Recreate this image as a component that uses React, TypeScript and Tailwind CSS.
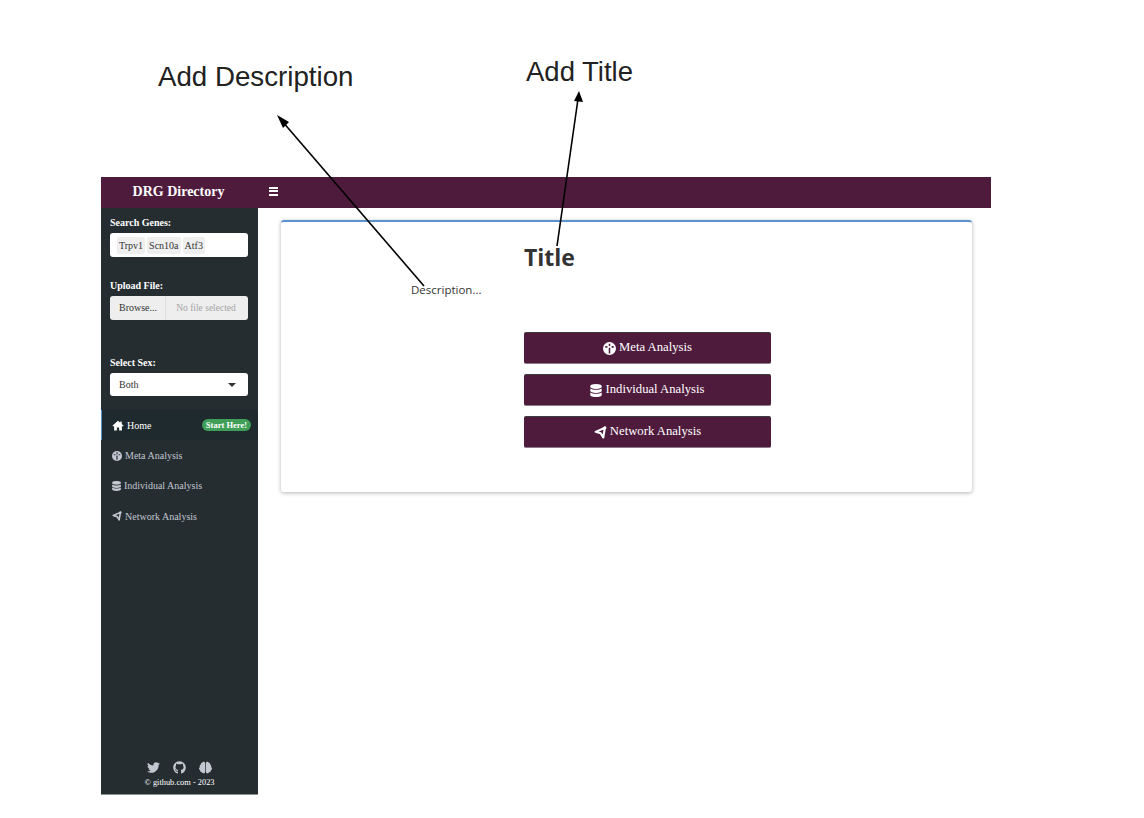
import { FaBrain, FaDatabase, FaGithub, FaTwitter } from 'react-icons/fa';
import type { ReactNode } from 'react';

const serif = "font-['Liberation_Serif',serif]";

function HomeIcon({ className }: { className?: string }) {
  return (
    <svg viewBox="0 0 16 14" className={className} fill="currentColor">
      <path d="M8 0.5 0.5 7.2 1.6 8.4 2.8 7.4V13.5H6.5V9.5H9.5V13.5H13.2V7.4L14.4 8.4 15.5 7.2 13 5V1.5H11V3.2Z" />
    </svg>
  );
}

function NetworkIcon({ className }: { className?: string }) {
  return (
    <svg viewBox="0 0 16 16" className={className} fill="none" stroke="currentColor">
      <path d="M2 7.2 13.4 2.2 11.4 14.2 8.2 9Z" strokeWidth="2.6" strokeLinejoin="round" />
      <circle cx="13.4" cy="2.2" r="1.9" fill="currentColor" stroke="none" />
    </svg>
  );
}

// gauge glyph, the marks take the colour of whatever is behind the icon
function MetaIcon({ className, markColor }: { className?: string; markColor: string }) {
  return (
    <svg viewBox="0 0 16 16" className={className}>
      <circle cx="8" cy="8" r="8" fill="currentColor" />
      <path d="M8 2V5M2.8 6H5.4M10.6 6H13.2M8 7V14" stroke={markColor} strokeWidth="1.9" />
    </svg>
  );
}

function Field({ label, children }: { label: string; children: ReactNode }) {
  return (
    <div>
      <div className="mb-[4px] text-[10px] leading-[12px] font-bold text-white">{label}</div>
      {children}
    </div>
  );
}

function NavItem({ icon, label, active, badge }: { icon: ReactNode; label: string; active?: boolean; badge?: boolean }) {
  return (
    <div
      className={`flex h-[30.4px] items-center text-[10px] ${
        active ? 'border-l border-[#5b8fc0] bg-[#1f2a2e] pl-[10px] text-white' : 'pl-[11px] text-[#c2c7d0]'
      }`}
    >
      {icon}
      <span className="ml-[3px]">{label}</span>
      {badge && (
        <span className="mr-[7px] ml-auto rounded-full bg-[#3f9f58] px-[4px] text-[8.5px] leading-[12px] font-bold text-white">
          Start Here!
        </span>
      )}
    </div>
  );
}

function ActionButton({ icon, label }: { icon: ReactNode; label: string }) {
  return (
    <button className="flex h-[32px] w-[247px] items-center justify-center gap-[3px] rounded-[2px] border-t border-b border-t-[#3c3c3c] border-b-[#8a7a88] bg-[#4f1b3d] text-[12.7px] text-white">
      {icon}
      {label}
    </button>
  );
}

function Arrows() {
  return (
    <svg className="absolute top-0 left-0" width="1144" height="818" fill="none">
      <path d="M424 286 282 121" stroke="#000" strokeWidth="1.6" />
      <path d="M277 115 289 122 283 128Z" fill="#000" />
      <path d="M557 246 578 99" stroke="#000" strokeWidth="1.6" />
      <path d="M579 91 583 102 574 101Z" fill="#000" />
    </svg>
  );
}

export default function App() {
  return (
    <div className="relative h-[818px] w-[1144px] overflow-hidden bg-white">
      <div className="pt-[177px] pl-[101px]">
        <div className={`flex h-[618px] w-[890px] flex-col ${serif}`}>
          <header className="flex h-[31px] shrink-0 items-center bg-[#4f1b3d] pb-[3px] text-white">
            <div className="w-[155px] text-center text-[14px] font-bold">DRG Directory</div>
            <div className="ml-[13px] flex w-[9px] flex-col gap-[1.5px]">
              <span className="h-[2px] bg-white" />
              <span className="h-[2px] bg-white" />
              <span className="h-[2px] bg-white" />
            </div>
          </header>
          <div className="flex min-h-0 flex-1">
            <aside className="flex w-[157px] shrink-0 flex-col border-b border-[#8b9296] bg-[#262d31]">
              <div className="flex flex-col gap-[23px] pt-[9px] pr-[10px] pl-[9px]">
                <Field label="Search Genes:">
                  <div className="flex h-[24px] items-center gap-[2px] rounded-[3px] bg-white px-[7px] text-[10px] text-[#333]">
                    <span className="rounded-[2px] bg-[#efefef] px-[2px] py-[1px]">Trpv1</span>
                    <span className="rounded-[2px] bg-[#efefef] px-[2px] py-[1px]">Scn10a</span>
                    <span className="rounded-[2px] bg-[#efefef] px-[2px] py-[1px]">Atf3</span>
                  </div>
                </Field>
                <Field label="Upload File:">
                  <div className="flex h-[24px] items-center rounded-[3px] bg-[#eeeeee] text-[10px]">
                    <span className="w-[56px] border-r border-[#dcdce2] pl-[1px] text-center leading-[24px] text-[#333]">Browse...</span>
                    <span className="flex-1 pr-[2px] text-center text-[9.5px] text-[#a5a5a5]">No file selected</span>
                  </div>
                </Field>
                <div className="pt-[14px]">
                  <Field label="Select Sex:">
                    <div className="flex h-[23px] items-center justify-between rounded-[3px] bg-white pr-[12px] pl-[9px] text-[10px] text-[#333]">
                      Both
                      <span className="h-0 w-0 border-x-[4px] border-t-[4px] border-x-transparent border-t-[#333]" />
                    </div>
                  </Field>
                </div>
              </div>
              <nav className="mt-[14px]">
                <NavItem active badge label="Home" icon={<HomeIcon className="h-[11px] w-[12px]" />} />
                <NavItem label="Meta Analysis" icon={<MetaIcon markColor="#262d31" className="h-[10px] w-[10px]" />} />
                <NavItem label="Individual Analysis" icon={<FaDatabase className="h-[10px] w-[9px]" />} />
                <NavItem label="Network Analysis" icon={<NetworkIcon className="h-[10px] w-[10px]" />} />
              </nav>
              <footer className="mt-auto pb-[5px] text-center text-white">
                <div className="mb-[3px] flex justify-center gap-[13px] text-[#c2c7d0]">
                  <FaTwitter className="h-[13px] w-[13px]" />
                  <FaGithub className="h-[13px] w-[13px]" />
                  <FaBrain className="h-[13px] w-[13px]" />
                </div>
                <div className="text-[8.4px] leading-[12px]">© github.com - 2023</div>
              </footer>
            </aside>
            <main className="min-w-0 flex-1 pt-[12px] pr-[19px] pl-[23px]">
              <section className="h-[272px] rounded-[3px] border-t-[2px] border-t-[#5b94cc] bg-white shadow-[0_1px_4px_rgba(0,0,0,0.3)]">
                <div className="pl-[243px]">
                  <h1 className="pt-[20px] font-['Open_Sans',sans-serif] text-[23px] leading-[30px] font-bold text-[#333]">Title</h1>
                  <p className="-ml-[113px] pt-[10px] font-['Open_Sans',sans-serif] text-[11.5px] leading-[16px] text-[#333]">Description...</p>
                  <div className="mt-[34px] flex flex-col gap-[10px]">
                    <ActionButton label="Meta Analysis" icon={<MetaIcon markColor="#4f1b3d" className="h-[13px] w-[13px]" />} />
                    <ActionButton label="Individual Analysis" icon={<FaDatabase className="h-[13px] w-[12px]" />} />
                    <ActionButton label="Network Analysis" icon={<NetworkIcon className="h-[13px] w-[13px]" />} />
                  </div>
                </div>
              </section>
            </main>
          </div>
        </div>
      </div>
      <Arrows />
      <div className="absolute top-[60px] left-[158px] font-['Liberation_Sans',sans-serif] text-[27.7px] leading-[34px] text-[#222]">Add Description</div>
      <div className="absolute top-[55px] left-[526px] font-['Liberation_Sans',sans-serif] text-[27.5px] leading-[34px] text-[#222]">Add Title</div>
    </div>
  );
}
